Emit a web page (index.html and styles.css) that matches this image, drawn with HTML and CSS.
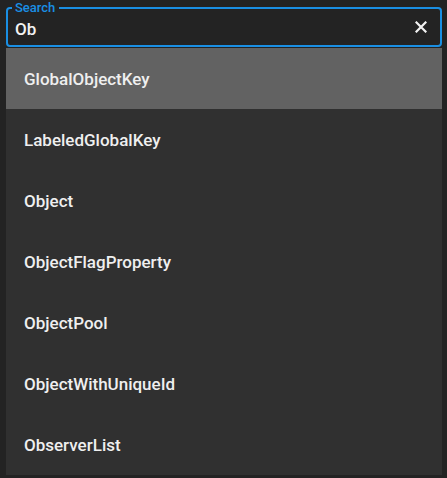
FILE: index.html
```html
<!DOCTYPE html>
<html>
<head>
<meta charset="utf-8">
<link rel="stylesheet" href="styles.css">
</head>
<body>
<div class="wrap">
  <div class="search">
    <span class="label">Search</span>
    <span class="value">Ob</span>
    <svg class="clear" width="12" height="12" viewBox="0 0 12 12"><path d="M1.5 1.5 L10.5 10.5 M10.5 1.5 L1.5 10.5" stroke="#f2f2f2" stroke-width="2.2" stroke-linecap="square" fill="none"/></svg>
  </div>
  <ul class="list">
    <li class="item active">GlobalObjectKey</li>
    <li class="item">LabeledGlobalKey</li>
    <li class="item">Object</li>
    <li class="item">ObjectFlagProperty</li>
    <li class="item">ObjectPool</li>
    <li class="item">ObjectWithUniqueId</li>
    <li class="item">ObserverList</li>
  </ul>
</div>
</body>
</html>
```
FILE: styles.css
```css
html, body {
  margin: 0;
  padding: 0;
  background: #232323;
  font-family: Roboto, "Liberation Sans", sans-serif;
}
.wrap {
  padding: 7px 5px 0 6px;
  display: flex;
  flex-direction: column;
}
.search {
  position: relative;
  display: flex;
  align-items: center;
  justify-content: space-between;
  height: 40px;
  box-sizing: border-box;
  border: 2px solid #1a8fe3;
  border-radius: 4px;
  padding: 3px 13px 0 7px;
}
.label {
  position: absolute;
  left: 4px;
  top: -9px;
  padding: 0 4px 0 3px;
  background: #232323;
  color: #1a8fe3;
  font-size: 13px;
  line-height: 16px;
  font-weight: 500;
}
.value {
  color: #f2f2f2;
  font-size: 17px;
  font-weight: 500;
}
.clear {
  display: block;
  margin-top: -3px;
}
.list {
  list-style: none;
  margin: 1px 0 0 0;
  padding: 0;
  background: #303030;
  height: 427px;
}
.item {
  height: 61px;
  display: flex;
  align-items: center;
  padding-left: 18px;
  box-sizing: border-box;
  color: #efefef;
  font-size: 17px;
  font-weight: 500;
}
.item.active {
  background: #626262;
}
```
